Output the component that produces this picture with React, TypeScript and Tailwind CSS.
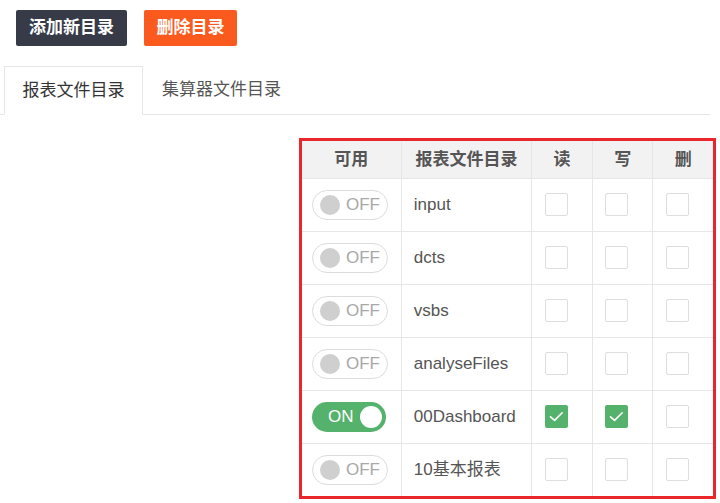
const rows = [
  { on: false, name: 'input', r: false, w: false, d: false },
  { on: false, name: 'dcts', r: false, w: false, d: false },
  { on: false, name: 'vsbs', r: false, w: false, d: false },
  { on: false, name: 'analyseFiles', r: false, w: false, d: false },
  { on: true, name: '00Dashboard', r: true, w: true, d: false },
  { on: false, name: '10基本报表', r: false, w: false, d: false },
]

function Toggle({ on }: { on: boolean }) {
  if (on) {
    return (
      <div className="flex h-[30px] w-[74px] items-center justify-between rounded-full bg-[#55b26c] pl-[16px] pr-[4px]">
        <span className="text-[17px] text-white">ON</span>
        <span className="h-[22px] w-[22px] rounded-full bg-white" />
      </div>
    )
  }
  return (
    <div className="flex h-[30px] w-[76px] items-center rounded-full border border-[#dcdcdc] bg-white pl-[7px]">
      <span className="h-[20px] w-[20px] rounded-full bg-[#cfcfcf]" />
      <span className="ml-[6px] text-[17px] text-[#a8a8a8]">OFF</span>
    </div>
  )
}

function Check({ checked }: { checked: boolean }) {
  if (checked) {
    return (
      <div className="flex h-[23px] w-[23px] items-center justify-center rounded-[2px] bg-[#55b26c]">
        <svg width="17" height="17" viewBox="0 0 17 17" fill="none">
          <path d="M2.5 8.8 L6.6 12.4 L14.2 4.8" stroke="white" strokeWidth="1.6" strokeLinecap="round" strokeLinejoin="round" />
        </svg>
      </div>
    )
  }
  return <div className="h-[23px] w-[23px] rounded-[2px] border border-[#dedede] bg-white" />
}

export default function App() {
  return (
    <div className="h-[503px] w-[720px] bg-white font-['Liberation_Sans','Noto_Sans_CJK_SC',sans-serif] text-[17px] text-[#333]">
      <div className="flex gap-[17px] pl-[16px] pt-[10px]">
        <button className="h-[36px] w-[111px] rounded-[2px] bg-[#373b48] font-bold text-white">添加新目录</button>
        <button className="h-[36px] w-[93px] rounded-[2px] bg-[#fb5a1f] font-bold text-white">删除目录</button>
      </div>

      <div className="mt-[20px] flex w-[710px] border-b border-[#e6e6e6] pl-[4px]">
        <div className="-mb-px flex h-[49px] w-[139px] items-center justify-center border border-b-white border-[#e6e6e6] bg-white text-[#333]">
          报表文件目录
        </div>
        <div className="flex h-[48px] items-center pl-[19px] text-[#555]">集算器文件目录</div>
      </div>

      <div className="ml-[299px] mt-[23px] w-[417px] border-[3px] border-[#e8262b]">
        <table className="w-full border-collapse">
          <thead>
            <tr className="h-[37px] bg-[#f2f2f2] text-[#555]">
              <th className="w-[99px] border-r border-[#e6e6e6] font-bold">可用</th>
              <th className="w-[130px] border-r border-[#e6e6e6] font-bold">报表文件目录</th>
              <th className="w-[61px] border-r border-[#e6e6e6] font-bold">读</th>
              <th className="w-[60px] border-r border-[#e6e6e6] font-bold">写</th>
              <th className="w-[60px] font-bold">删</th>
            </tr>
          </thead>
          <tbody>
            {rows.map((row, i) => (
              <tr key={i} className="h-[53px] border-t border-[#e6e6e6]">
                <td className="border-r border-[#e6e6e6] pl-[10px]">
                  <Toggle on={row.on} />
                </td>
                <td className="border-r border-[#e6e6e6] pl-[12px] text-[#555]">{row.name}</td>
                <td className="border-r border-[#e6e6e6] pl-[13px]">
                  <Check checked={row.r} />
                </td>
                <td className="border-r border-[#e6e6e6] pl-[12px]">
                  <Check checked={row.w} />
                </td>
                <td className="pl-[13px]">
                  <Check checked={row.d} />
                </td>
              </tr>
            ))}
          </tbody>
        </table>
      </div>
    </div>
  )
}
